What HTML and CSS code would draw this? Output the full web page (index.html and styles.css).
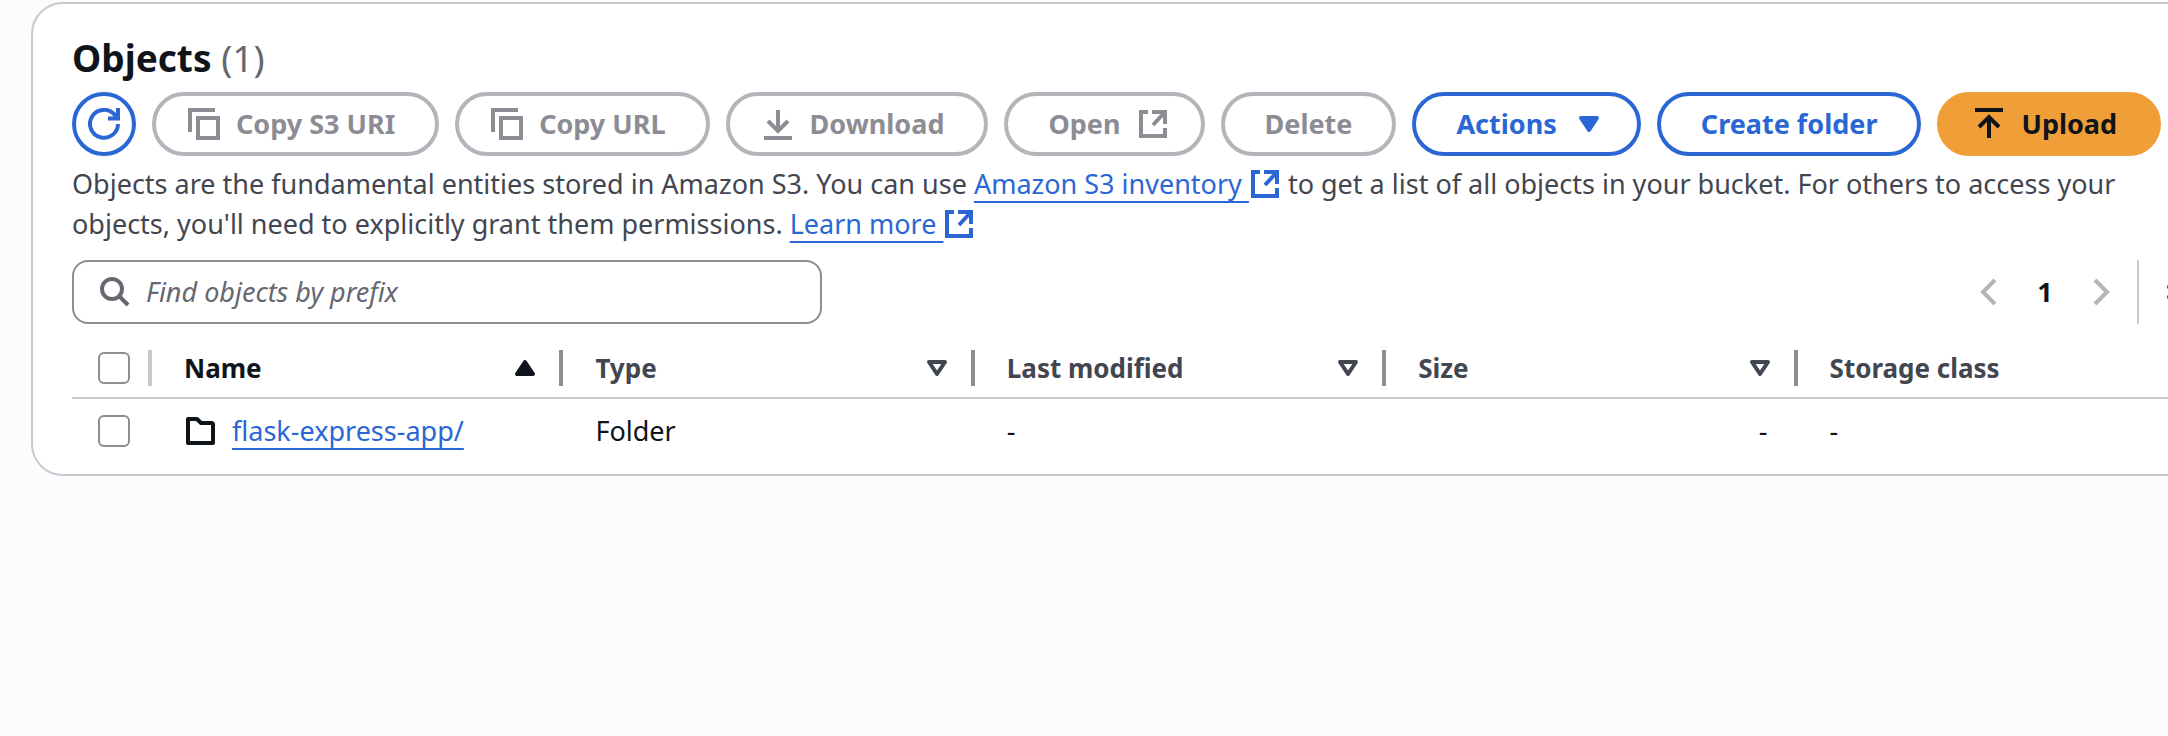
FILE: index.html
```html
<!DOCTYPE html>
<html lang="en">
<head>
<meta charset="utf-8">
<title>Objects</title>
<link rel="stylesheet" href="styles.css">
</head>
<body>
<svg class="sprite" aria-hidden="true">
  <symbol id="copy" viewBox="0 0 32 32"><path d="M2 24V2H27M10 10H30V30H10Z"/></symbol>
  <symbol id="external" viewBox="0 0 32 32"><path d="M11 4H4V28H28V20M15 4H28V16M28 4L16 17"/></symbol>
  <symbol id="folder" viewBox="0 0 32 32"><path d="M4 4H13L17 8H28L29 9V28H4Z" stroke-linejoin="round"/></symbol>
  <symbol id="sort" viewBox="0 0 32 32"><path d="M8 10H24L16 22Z" stroke-linejoin="round"/></symbol>
</svg>
<main class="card">
  <h1 class="title">Objects <span class="count">(1)</span></h1>
  <div class="actions">
    <button class="btn btn-round" aria-label="Refresh">
      <svg class="icon" viewBox="0 0 32 32"><path d="M30 16A14 14 0 1 1 26 6L30 10M30 0V10.500H20"/></svg>
    </button>
    <button class="btn lead" disabled><svg class="icon"><use href="#copy"/></svg>Copy S3 URI</button>
    <button class="btn lead" disabled><svg class="icon"><use href="#copy"/></svg>Copy URL</button>
    <button class="btn lead" disabled><svg class="icon" viewBox="0 0 32 32"><path d="M16 2V23M6 13L16 23L26 13M2 30H30"/></svg>Download</button>
    <button class="btn trail" disabled>Open<svg class="icon"><use href="#external"/></svg></button>
    <button class="btn" disabled>Delete</button>
    <button class="btn trail">Actions<svg class="icon" viewBox="0 0 32 32"><path class="solid" d="M8 10H24L16 22Z"/></svg></button>
    <button class="btn">Create folder</button>
    <button class="btn lead primary"><svg class="icon" viewBox="0 0 32 32"><path d="M2 2H30M16 30V9M6 19L16 9L26 19"/></svg>Upload</button>
  </div>
  <p class="description">Objects are the fundamental entities stored in Amazon S3. You can use <a class="link" href="#inventory">Amazon S3 inventory </a><svg class="icon inline"><use href="#external"/></svg> to get a list of all objects in your bucket. For others to access your objects, you'll need to explicitly grant them permissions. <a class="link" href="#learn">Learn more </a><svg class="icon inline"><use href="#external"/></svg></p>
  <div class="tools">
    <label class="search">
      <svg class="icon" viewBox="0 0 32 32"><circle cx="14" cy="13" r="10"/><path d="M21 20L30 29"/></svg>
      <input class="search-input" type="text" placeholder="Find objects by prefix" aria-label="Find objects by prefix">
    </label>
    <nav class="pages" aria-label="Pages">
      <button class="page arrow" disabled aria-label="Previous page"><svg class="icon" viewBox="0 0 32 32"><path d="M22 4L10 16L22 28"/></svg></button>
      <button class="page" aria-current="page">1</button>
      <button class="page arrow" disabled aria-label="Next page"><svg class="icon" viewBox="0 0 32 32"><path d="M10 4L22 16L10 28"/></svg></button>
    </nav>
    <button class="settings" aria-label="Preferences"><svg class="icon" viewBox="0 0 32 32"><circle cx="16" cy="16" r="4"/><path d="M13 2H19L20 7L25 5L29 11L25 16L29 21L25 27L20 25L19 30H13L12 25L7 27L2 21L5 16L2 11L7 5L12 7Z"/></svg></button>
  </div>
  <table class="table">
    <thead>
      <tr>
        <th class="select"><div class="head pale"><input class="check" type="checkbox" aria-label="Select all"></div></th>
        <th class="sorted"><div class="head">Name<svg class="icon" viewBox="0 0 32 32"><path class="solid" d="M8 22H24L16 10Z"/></svg></div></th>
        <th><div class="head">Type<svg class="icon"><use href="#sort"/></svg></div></th>
        <th><div class="head">Last modified<svg class="icon"><use href="#sort"/></svg></div></th>
        <th><div class="head">Size<svg class="icon"><use href="#sort"/></svg></div></th>
        <th><div class="head last">Storage class</div></th>
      </tr>
    </thead>
    <tbody>
      <tr>
        <td class="select"><input class="check" type="checkbox" aria-label="Select flask-express-app/"></td>
        <td><div class="name"><svg class="icon"><use href="#folder"/></svg><a class="link" href="#folder-view">flask-express-app/</a></div></td>
        <td>Folder</td>
        <td>-</td>
        <td class="number">-</td>
        <td>-</td>
      </tr>
    </tbody>
  </table>
</main>
</body>
</html>
```
FILE: styles.css
```css
* { box-sizing: border-box; }

html { overflow: hidden; }

body {
  margin: 0;
  padding: 2px 0 0 31px;
  background: #fcfcfe;
  color: #0f141a;
  font: 27px/40px "Noto Sans", "Open Sans", sans-serif;
}

button, input { font: inherit; }

.sprite { position: absolute; width: 0; height: 0; }

.icon {
  flex: none;
  width: 32px;
  height: 32px;
  fill: none;
  stroke: currentColor;
  stroke-width: 4px;
}

.solid { fill: currentColor; stroke-linejoin: round; }

/* The card runs past the right edge of the window. */
.card {
  width: calc(100% + 82px);
  padding: 30px 39px 12px;
  border: 2px solid #c8c8ce;
  border-radius: 32px;
  background: #fff;
}

.title { margin: 0 0 10px; font-size: 37px; line-height: 48px; }
.count { color: #656871; font-weight: 400; }

.actions { display: flex; gap: 16px; }

.btn {
  display: flex;
  flex: none;
  align-items: center;
  gap: 16px;
  height: 64px;
  padding: 0 40px;
  border: 4px solid #2a67d4;
  border-radius: 32px;
  background: #fff;
  color: #2a67d4;
  font-weight: 700;
}

.btn:disabled { border-color: #b4b4bb; color: #8c8c94; }
.btn-round { padding: 0 12px; }
.lead { padding-left: 32px; }
.trail { padding-right: 32px; }
.primary { border-color: #f09e38; background: #f09e38; color: #0f141a; }

.description { margin: 8px 0 16px; color: #424650; }

.link {
  color: #2a67d4;
  text-decoration: underline 2px;
  text-decoration-skip-ink: none;
  text-underline-offset: 7px;
  white-space: pre;
}

.inline { color: #2a67d4; vertical-align: -6px; }

.tools { display: flex; align-items: center; margin-bottom: 14px; }

.search {
  display: flex;
  align-items: center;
  gap: 16px;
  width: 750px;
  height: 64px;
  margin-right: auto;
  padding: 0 24px;
  border: 2px solid #8c8c94;
  border-radius: 16px;
  color: #656871;
}

.search-input { flex: 1; min-width: 0; padding: 0; border: 0; outline: 0; background: none; font-size: 27px; }
.search-input::placeholder { color: #656871; font-style: italic; opacity: 1; }

.pages { display: flex; align-items: center; gap: 24px; padding-right: 20px; }

.page, .settings {
  display: flex;
  justify-content: center;
  padding: 0;
  border: 0;
  background: none;
  color: #0f141a;
  font-weight: 700;
}

.page { width: 32px; }
.arrow { color: #b4b4bb; }

.settings {
  align-items: center;
  height: 64px;
  padding: 0 10px 0 28px;
  border-left: 2px solid #c8c8ce;
  color: #424650;
}

.table { width: 100%; border-collapse: collapse; table-layout: fixed; }

th {
  height: 60px;
  padding: 0;
  border-bottom: 2px solid #cacace;
  color: #424650;
  font-size: 26px;
  text-align: left;
}

.sorted { color: #0f141a; }
.select { width: 80px; }

.head {
  display: flex;
  align-items: center;
  justify-content: space-between;
  height: 36px;
  padding: 0 18px 0 32px;
  border-right: 4px solid #8c8c94;
}

.pale { padding: 0 0 0 26px; border-color: #c8c8ce; }
.last { border-right: 0; }

td { height: 64px; padding: 0 30px 0 32px; }
td.select { padding: 0 0 0 26px; }
.number { text-align: right; }

.name { display: flex; align-items: center; gap: 16px; }

.check {
  display: block;
  flex: none;
  appearance: none;
  width: 32px;
  height: 32px;
  margin: 0;
  border: 2px solid #8c8c94;
  border-radius: 6px;
  background: #fff;
}
```
